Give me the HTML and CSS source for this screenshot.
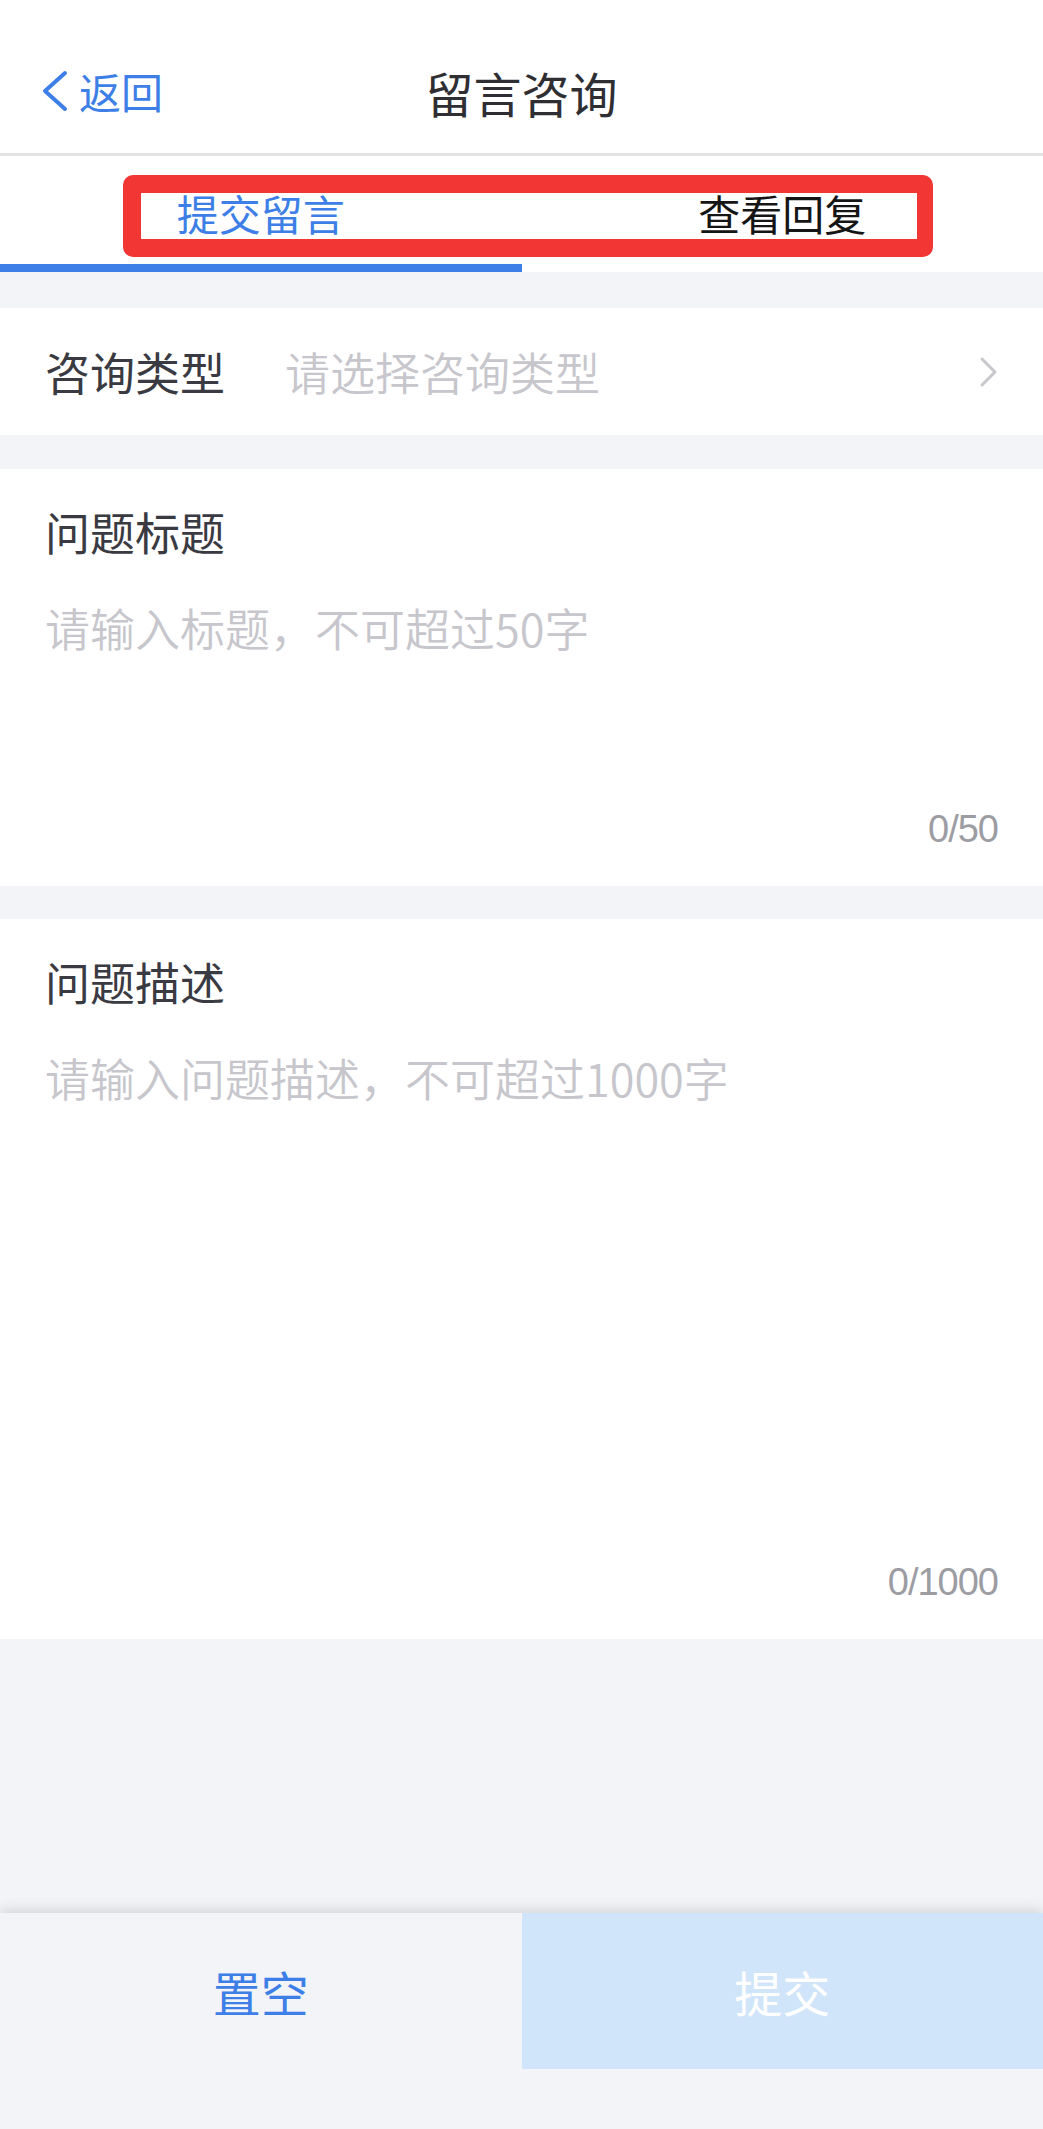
FILE: index.html
```html
<!DOCTYPE html>
<html lang="zh-CN">
<head>
<meta charset="utf-8">
<title>留言咨询</title>
<link rel="stylesheet" href="styles.css">
</head>
<body>
<div class="page">
  <header class="navbar">
    <div class="nav-left">
      <a class="back">
        <svg class="back-icon" width="28" height="42" viewBox="0 0 28 42"><polyline points="24,3 4,21 24,39" fill="none" stroke="#3d7fe6" stroke-width="4" stroke-linecap="round" stroke-linejoin="round"/></svg>
        <span class="back-text">返回</span>
      </a>
    </div>
    <h1 class="nav-title">留言咨询</h1>
    <div class="nav-right"></div>
  </header>

  <nav class="tabs">
    <div class="tab tab-active">提交留言</div>
    <div class="tab">查看回复</div>
    <div class="annot-box"></div>
  </nav>

  <section class="card card-select">
    <span class="field-label">咨询类型</span>
    <span class="select-placeholder">请选择咨询类型</span>
    <svg class="chevron" width="22" height="32" viewBox="0 0 22 32"><polyline points="4,3 17,16 4,29" fill="none" stroke="#c7c7cc" stroke-width="3" stroke-linecap="round" stroke-linejoin="round"/></svg>
  </section>

  <section class="card card-input">
    <div class="field-label">问题标题</div>
    <div class="input-area input-short"><span class="placeholder">请输入标题，不可超过50字</span></div>
    <div class="counter">0/50</div>
  </section>

  <section class="card card-input">
    <div class="field-label">问题描述</div>
    <div class="input-area input-long"><span class="placeholder">请输入问题描述，不可超过1000字</span></div>
    <div class="counter">0/1000</div>
  </section>

  <footer class="bottom-bar">
    <button class="btn btn-reset">置空</button>
    <button class="btn btn-submit">提交</button>
  </footer>
</div>
</body>
</html>
```

FILE: styles.css
```css
* {
  box-sizing: border-box;
}

html, body {
  margin: 0;
  padding: 0;
}

body {
  background: #f3f4f8;
  font-family: "Noto Sans CJK SC", "Noto Sans", sans-serif;
  color: #333;
}

.page {
  width: 1043px;
  min-height: 2129px;
  display: flex;
  flex-direction: column;
}

/* Navbar */
.navbar {
  height: 156px;
  padding-top: 30px;
  background: #fff;
  border-bottom: 3px solid #e3e3e6;
  display: grid;
  grid-template-columns: 1fr auto 1fr;
  align-items: center;
}

.nav-left {
  padding-left: 41px;
}

.back {
  display: inline-flex;
  align-items: center;
  gap: 10px;
  color: #3d7fe6;
}

.back-icon {
  display: block;
}

.back-text {
  font-size: 42px;
  line-height: 50px;
}

.nav-title {
  margin: 0;
  font-size: 48px;
  font-weight: 400;
  line-height: 60px;
  color: #2e2e33;
}

/* Tabs */
.tabs {
  position: relative;
  height: 116px;
  background: #fff;
  display: flex;
}

.tab {
  flex: 1;
  display: flex;
  align-items: center;
  justify-content: center;
  font-size: 42px;
  line-height: 50px;
  color: #151515;
  padding-top: 6px;
  border-bottom: 8px solid transparent;
}

.tab-active {
  color: #3d7fe6;
  border-bottom-color: #3d7fe6;
}

.annot-box {
  position: absolute;
  left: 123px;
  top: 19px;
  width: 810px;
  height: 82px;
  border: 18px solid #f23634;
  border-right-width: 16px;
  border-radius: 10px;
  pointer-events: none;
}

/* Cards */
.card {
  background: #fff;
}

.card-select {
  margin-top: 36px;
  height: 127px;
  padding: 0 45px 0 45px;
  display: flex;
  align-items: center;
}

.field-label {
  font-size: 45px;
  line-height: 63px;
  color: #3a3a42;
}

.select-placeholder {
  margin-left: 60px;
  flex: 1;
  font-size: 45px;
  line-height: 63px;
  font-weight: 350;
  color: #c6c6cc;
}

.chevron {
  display: block;
  margin-right: -2px;
}

.card-input {
  margin-top: 34px;
  padding: 31px 45px 30px 45px;
  display: flex;
  flex-direction: column;
}

.card-input + .card-input {
  margin-top: 33px;
}

.input-area {
  margin-top: 33px;
}

.input-short {
  height: 207px;
}

.input-long {
  height: 510px;
}

.placeholder {
  font-size: 45px;
  line-height: 63px;
  font-weight: 350;
  color: #c6c6cc;
}

.counter {
  align-self: flex-end;
  font-family: "Liberation Sans", Arial, sans-serif;
  font-size: 38px;
  line-height: 53px;
  color: #9c9ca3;
  letter-spacing: -1px;
}

/* Bottom bar */
.bottom-bar {
  margin-top: auto;
  display: flex;
  background: #f3f4f8;
  padding-bottom: 60px;
  box-shadow: 0 -4px 12px rgba(0, 0, 0, 0.12);
}

.btn {
  flex: 1;
  height: 156px;
  border: 0;
  margin: 0;
  padding: 0;
  font-family: "Noto Sans CJK SC", "Noto Sans", sans-serif;
  font-size: 48px;
  line-height: 60px;
}

.btn-reset {
  background: #f3f4f8;
  color: #3d7fe6;
}

.btn-submit {
  background: #d0e5f9;
  color: #ffffff;
}
```
